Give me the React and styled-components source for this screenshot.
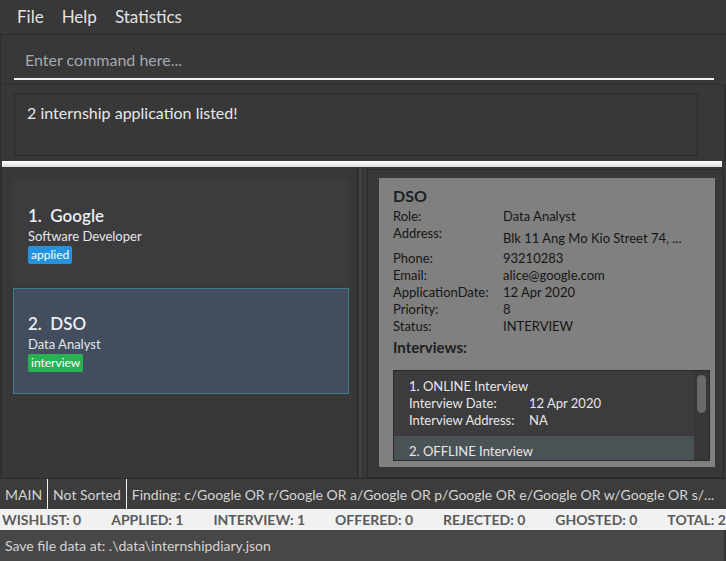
import React from "react";
import styled, { createGlobalStyle } from "styled-components";

const GlobalStyle = createGlobalStyle`
  html, body {
    margin: 0;
    padding: 0;
    background: #383838;
  }
  * {
    box-sizing: border-box;
  }
`;

const FONT = `"Lato", "Noto Sans", "Liberation Sans", sans-serif`;

const Page = styled.div`
  width: 726px;
  height: 561px;
  display: flex;
  flex-direction: column;
  background: #383838;
  font-family: ${FONT};
  overflow: hidden;
`;

const MenuBar = styled.div`
  height: 35px;
  flex-shrink: 0;
  display: flex;
  align-items: center;
  padding: 0 8px;
  border-bottom: 1px solid #2b2b2b;
`;
const MenuItem = styled.span`
  color: #e2e2e2;
  font-size: 17px;
  padding: 0 9px;
  margin-top: -2px;
`;

const CommandBox = styled.div`
  height: 50px;
  flex-shrink: 0;
  padding: 8px 12px 0 13px;
  border-left: 1px solid #2e2e2e;
  border-bottom: 1px solid #2e2e2e;
`;
const CommandInput = styled.input`
  width: 100%;
  height: 37px;
  background: transparent;
  border: none;
  border-bottom: 2px solid #f2f2f2;
  outline: none;
  color: #e2e2e2;
  font-family: ${FONT};
  font-size: 16px;
  padding: 0 11px 2px;
  &::placeholder {
    color: #a3aab2;
  }
`;

const ResultBox = styled.div`
  height: 76px;
  flex-shrink: 0;
  padding: 8px 26px 5px 13px;
  border-left: 1px solid #2e2e2e;
  border-right: 2px solid #2e2e2e;
`;
const ResultInner = styled.div`
  height: 100%;
  border: 1px solid #2b2b2b;
  color: #e6e8ee;
  font-size: 16px;
  padding: 9px 12px;
`;

const Divider = styled.div`
  height: 6px;
  flex-shrink: 0;
  margin: 0 4px 0 2px;
  background: linear-gradient(#ffffff, #dcdcdc);
`;

const Main = styled.div`
  flex: 1;
  display: flex;
  min-height: 0;
  border-left: 2px solid #2f2f2f;
`;

const ListPanel = styled.div`
  width: 356px;
  padding: 13px 8px 0 11px;
  display: flex;
  flex-direction: column;
  gap: 2px;
  border-right: 1px solid #2c2c2c;
`;

const Card = styled.div`
  height: 106px;
  flex-shrink: 0;
  background: ${(p) => (p.$selected ? "#424d5e" : "#3c3c3e")};
  border: 1px solid ${(p) => (p.$selected ? "#3e7a8a" : "#3c3c3e")};
  padding: 3px 14px 0;
  display: flex;
  flex-direction: column;
  justify-content: center;
`;
const CardTitle = styled.div`
  color: #eceff2;
  font-size: 17px;
  font-weight: 600;
  line-height: 22px;
  white-space: pre;
`;
const CardRole = styled.div`
  color: #e6e6e6;
  font-size: 13px;
  line-height: 18px;
`;
const Tag = styled.span`
  align-self: flex-start;
  background: ${(p) => p.$color};
  color: #fff;
  font-size: 12px;
  line-height: 18px;
  padding: 0 3px;
  border-radius: 2px;
  margin-top: 1px;
`;

const PanelSplit = styled.div`
  width: 3px;
  background: #444444;
  border-left: 1px solid #2f2f2f;
`;

const DetailPanel = styled.div`
  flex: 1;
  margin: 2px 2px 0 6px;
  border: 1px solid #2a2a2a;
  padding: 8px 8px 10px 11px;
  display: flex;
`;
const DetailCard = styled.div`
  flex: 1;
  background: #808080;
  padding: 8px 5px 0 14px;
  color: #161616;
  display: flex;
  flex-direction: column;
  min-height: 0;
`;
const DetailName = styled.div`
  font-size: 16px;
  font-weight: 700;
  line-height: 20px;
  color: #202020;
`;
const InfoGrid = styled.div`
  display: grid;
  grid-template-columns: 110px 1fr;
  font-size: 13px;
  line-height: 17px;
  margin-top: 2px;
`;
const InfoValue = styled.div`
  padding-top: ${(p) => (p.$low ? "5px" : "0")};
  padding-bottom: ${(p) => (p.$low ? "3px" : "0")};
`;
const SectionTitle = styled.div`
  font-size: 15px;
  font-weight: 700;
  line-height: 20px;
  margin-top: 2px;
  color: #202020;
`;

const InterviewList = styled.div`
  margin-top: 13px;
  height: 91px;
  flex-shrink: 0;
  border: 1px solid #2a2a2a;
  background: #383838;
  display: flex;
  overflow: hidden;
`;
const InterviewItems = styled.div`
  flex: 1;
  display: flex;
  flex-direction: column;
  gap: 1px;
`;
const InterviewItem = styled.div`
  background: ${(p) => (p.$alt ? "#4b5256" : "#3c3c3e")};
  color: #e6e6e6;
  font-size: 13px;
  line-height: 17px;
  padding: 7px 15px 6px 15px;
  flex-shrink: 0;
`;
const InterviewRow = styled.div`
  display: grid;
  grid-template-columns: 120px 1fr;
`;
const ScrollTrack = styled.div`
  width: 15px;
  padding: 4px 3px 0 3px;
`;
const ScrollThumb = styled.div`
  height: 38px;
  border-radius: 5px;
  background: #6a6a6a;
`;

const StatusBar = styled.div`
  height: 31px;
  flex-shrink: 0;
  display: flex;
  align-items: stretch;
  border-top: 1px solid #2a2a2a;
  background: #3c3c3c;
  color: #d4d4d4;
  font-size: 14px;
`;
const StatusCell = styled.div`
  display: flex;
  align-items: center;
  padding: 0 5px;
  white-space: nowrap;
  overflow: hidden;
  border-left: ${(p) => (p.$sep ? "1.5px solid #f0f0f0" : "none")};
  flex: ${(p) => (p.$grow ? 1 : "none")};
`;

const StatsBar = styled.div`
  height: 21px;
  flex-shrink: 0;
  background: #f1f1f1;
  display: flex;
  align-items: center;
  justify-content: space-between;
  padding: 0 0 0 2px;
  color: #5a5a5a;
  font-size: 14px;
  font-weight: 700;
  white-space: nowrap;
`;

const SaveBar = styled.div`
  height: 31px;
  flex-shrink: 0;
  background: #474747;
  color: #d4d4d4;
  font-size: 14px;
  display: flex;
  align-items: center;
  padding: 0 5px;
  border-right: 2px solid #333;
`;

const details = [
  ["Role:", "Data Analyst"],
  ["Address:", "Blk 11 Ang Mo Kio Street 74, ..."],
  ["Phone:", "93210283"],
  ["Email:", "alice@google.com"],
  ["ApplicationDate:", "12 Apr 2020"],
  ["Priority:", "8"],
  ["Status:", "INTERVIEW"],
];

const stats = [
  "WISHLIST: 0",
  "APPLIED: 1",
  "INTERVIEW: 1",
  "OFFERED: 0",
  "REJECTED: 0",
  "GHOSTED: 0",
  "TOTAL: 2",
];

export default function App() {
  return (
    <Page>
      <GlobalStyle />
      <MenuBar>
        <MenuItem>File</MenuItem>
        <MenuItem>Help</MenuItem>
        <MenuItem>Statistics</MenuItem>
      </MenuBar>
      <CommandBox>
        <CommandInput placeholder="Enter command here..." />
      </CommandBox>
      <ResultBox>
        <ResultInner>2 internship application listed!</ResultInner>
      </ResultBox>
      <Divider />
      <Main>
        <ListPanel>
          <Card>
            <CardTitle>{"1.  Google"}</CardTitle>
            <CardRole>Software Developer</CardRole>
            <Tag $color="#2492e0">applied</Tag>
          </Card>
          <Card $selected>
            <CardTitle>{"2.  DSO"}</CardTitle>
            <CardRole>Data Analyst</CardRole>
            <Tag $color="#27b352">interview</Tag>
          </Card>
        </ListPanel>
        <PanelSplit />
        <DetailPanel>
          <DetailCard>
            <DetailName>DSO</DetailName>
            <InfoGrid>
              {details.map(([label, value]) => (
                <React.Fragment key={label}>
                  <div>{label}</div>
                  <InfoValue $low={label === "Address:"}>{value}</InfoValue>
                </React.Fragment>
              ))}
            </InfoGrid>
            <SectionTitle>Interviews:</SectionTitle>
            <InterviewList>
              <InterviewItems>
                <InterviewItem>
                  <div>1. ONLINE Interview</div>
                  <InterviewRow>
                    <span>Interview Date:</span>
                    <span>12 Apr 2020</span>
                  </InterviewRow>
                  <InterviewRow>
                    <span>Interview Address:</span>
                    <span>NA</span>
                  </InterviewRow>
                </InterviewItem>
                <InterviewItem $alt>
                  <div>2. OFFLINE Interview</div>
                </InterviewItem>
              </InterviewItems>
              <ScrollTrack>
                <ScrollThumb />
              </ScrollTrack>
            </InterviewList>
          </DetailCard>
        </DetailPanel>
      </Main>
      <StatusBar>
        <StatusCell>MAIN</StatusCell>
        <StatusCell $sep>Not Sorted</StatusCell>
        <StatusCell $sep $grow>
          Finding: c/Google OR r/Google OR a/Google OR p/Google OR e/Google OR w/Google OR s/...
        </StatusCell>
      </StatusBar>
      <StatsBar>
        {stats.map((s) => (
          <span key={s}>{s}</span>
        ))}
      </StatsBar>
      <SaveBar>Save file data at: .\data\internshipdiary.json</SaveBar>
    </Page>
  );
}
